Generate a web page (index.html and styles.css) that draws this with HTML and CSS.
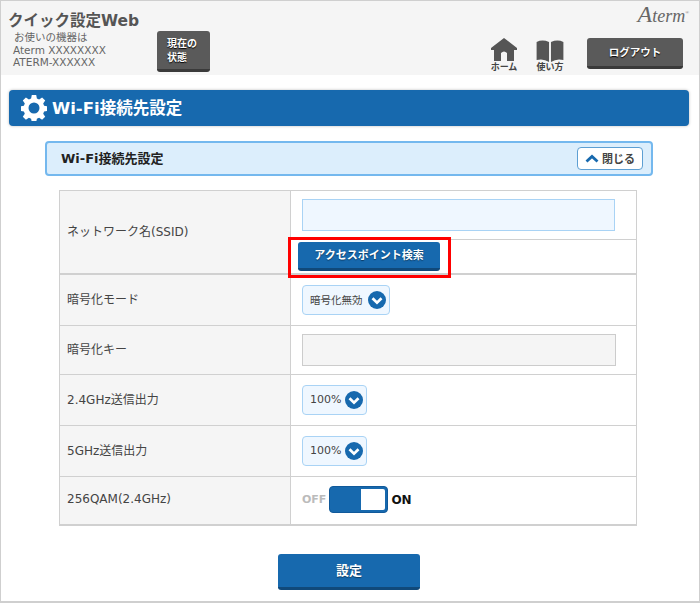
FILE: index.html
```html
<!DOCTYPE html>
<html lang="ja">
<head>
  <meta charset="UTF-8">
  <meta name="viewport" content="width=device-width, initial-scale=1.0">
  <title>Wi-Fi接続先設定</title>
  <link rel="stylesheet" href="styles.css">
</head>
<body>
  <div class="container">
    <header>
      <div class="device">
        <div class="logo">クイック設定Web</div>
        <p class="device-label">お使いの機器は</p>
        <p>Aterm XXXXXXXX</p>
        <p>ATERM-XXXXXX</p>
      </div>
      <a class="btn-dark btn-status">現在の<br>状態</a>
      <nav>
        <a class="nav-home">
          <svg width="26" height="23" viewBox="0 0 26 23"><path d="M13 0 L26 10 L26 12 L23 12 L23 23 L16 23 L16 15 Q13 12 10 15 L10 23 L3 23 L3 12 L0 12 L0 10 Z" fill="#555"/></svg>
          <span>ホーム</span>
        </a>
        <a class="nav-help">
          <svg width="30" height="22" viewBox="0 0 30 23"><path d="M1 2 Q7 -1 14 2 L14 23 Q8 19 1 21 Z M16 2 Q23 -1 29 2 L29 21 Q22 19 16 23 Z" fill="#555"/></svg>
          <span>使い方</span>
        </a>
        <a class="btn-dark btn-logout">ログアウト</a>
      </nav>
      <div class="brand">Aterm<sup>®</sup></div>
    </header>

    <h1 class="page-title">
      <svg width="26" height="26" viewBox="0 0 26 26"><path fill="#fff" fill-rule="evenodd" d="M10.8 0h4.4l.7 3.5 2.2.9 3-2 3.1 3.100-2 3 .9 2.200 3.500.7v4.400l-3.500.7-.9 2.200 2 3-3.100 3.100-3-2-2.200.9-.7 3.500h-4.400l-.7-3.500-2.200-.9-3 2-3.100-3.100 2-3-.9-2.200-3.500-.7v-4.400l3.500-.7.9-2.200-2-3 3.100-3.100 3 2 2.200-.9zM13 7.500a5.500 5.500 0 1 0 0 11 5.500 5.500 0 0 0 0-11z"/></svg>
      <span>Wi-Fi接続先設定</span>
    </h1>

    <div class="panel-head">
      <h2>Wi-Fi接続先設定</h2>
      <a class="btn-close">
        <svg width="14" height="9" viewBox="0 0 14 9"><path d="M1.500 7.500 L7 2.500 L12.500 7.500" fill="none" stroke="#1769ae" stroke-width="2.800"/></svg>
        <span>閉じる</span>
      </a>
    </div>

    <div class="settings">
      <div class="row row-ssid">
        <div class="label">ネットワーク名(SSID)</div>
        <div class="value-stack">
          <div class="ssid-input"><div class="input input-ssid"></div></div>
          <div class="ssid-search">
            <a class="btn-blue btn-search">アクセスポイント検索</a>
            <div class="highlight"></div>
          </div>
        </div>
      </div>
      <div class="row row-mode">
        <div class="label">暗号化モード</div>
        <div class="value">
          <div class="select select-mode">暗号化無効
            <svg class="chevron" width="18" height="18" viewBox="0 0 20 20"><circle cx="10" cy="10" r="10" fill="#1769ae"/><path d="M5 8 L10 13 L15 8" fill="none" stroke="#fff" stroke-width="3"/></svg>
          </div>
        </div>
      </div>
      <div class="row row-key">
        <div class="label">暗号化キー</div>
        <div class="value"><div class="input input-key"></div></div>
      </div>
      <div class="row row-power">
        <div class="label">2.4GHz送信出力</div>
        <div class="value">
          <div class="select">100%
            <svg class="chevron" width="18" height="18" viewBox="0 0 20 20"><circle cx="10" cy="10" r="10" fill="#1769ae"/><path d="M5 8 L10 13 L15 8" fill="none" stroke="#fff" stroke-width="3"/></svg>
          </div>
        </div>
      </div>
      <div class="row row-power">
        <div class="label">5GHz送信出力</div>
        <div class="value">
          <div class="select">100%
            <svg class="chevron" width="18" height="18" viewBox="0 0 20 20"><circle cx="10" cy="10" r="10" fill="#1769ae"/><path d="M5 8 L10 13 L15 8" fill="none" stroke="#fff" stroke-width="3"/></svg>
          </div>
        </div>
      </div>
      <div class="row row-qam">
        <div class="label">256QAM(2.4GHz)</div>
        <div class="value toggle-wrap">
          <span class="off">OFF</span>
          <div class="toggle"><div class="knob"></div></div>
          <span class="on">ON</span>
        </div>
      </div>
    </div>

    <div class="actions">
      <a class="btn-blue btn-submit">設定</a>
    </div>
  </div>
</body>
</html>
```

FILE: styles.css
```css
* { margin: 0; padding: 0; box-sizing: border-box; }
body {
  font-family: 'DejaVu Sans', 'Noto Sans CJK JP', sans-serif;
  background-color: #ffffff;
  color: #333;
  font-size: 12px;
}
.container {
  width: 700px;
  height: 603px;
  border: 1px solid #cfcfcf;
  border-bottom-width: 2px;
  overflow: hidden;
}

header {
  position: relative;
  height: 74px;
  background-color: #f5f5f5;
  display: flex;
  align-items: flex-start;
  padding-left: 7px;
}
.device { width: 149px; padding-top: 9px; color: #666; font-size: 10.5px; line-height: 12.5px; }
.device p { white-space: nowrap; padding-left: 5px; }
.device .device-label { padding-left: 6px; }
.logo { font-size: 15.5px; font-weight: bold; line-height: 22px; color: #555; margin-bottom: -1px; }

.btn-dark {
  display: block;
  background: #5a5a5a;
  border-bottom: 3px solid #3a3a3a;
  border-radius: 3px;
  color: #fff;
  font-weight: bold;
  font-size: 10px;
  line-height: 14px;
  text-shadow: 0 1px 1px #000;
}
.btn-status { width: 53px; height: 41px; margin-top: 30px; padding: 6px 0 0 10px; }

nav { margin-left: auto; display: flex; align-items: flex-start; padding-right: 16px; }
nav a { display: flex; flex-direction: column; align-items: center; }
nav span { font-size: 9px; line-height: 11px; color: #444; font-weight: bold; margin-top: 1px; }
.nav-home { width: 30px; margin-top: 37px; }
.nav-help { width: 32px; margin: 39px 0 0 15px; }
.nav-help span { margin-top: 0; }
nav .btn-logout {
  width: 96px;
  height: 31px;
  margin: 37px 0 0 21px;
  padding-top: 7px;
  font-size: 10.5px;
  text-align: center;
}

.brand {
  position: absolute;
  top: 0;
  right: 10px;
  font-family: 'Liberation Serif', serif;
  font-style: italic;
  font-size: 18px;
  color: #666;
}
.brand::first-letter { font-size: 24px; }
.brand sup { font-size: 5px; vertical-align: 8px; }

.page-title {
  margin: 15px 0 0 8px;
  width: 680px;
  height: 36px;
  background: #1769ae;
  border-radius: 4px;
  box-shadow: 0 0 3px #bbb;
  color: #fff;
  font-size: 16.5px;
  font-weight: bold;
  display: flex;
  align-items: center;
  gap: 5px;
  padding-left: 12px;
}
.page-title span { padding-bottom: 3px; }

.panel-head {
  margin: 15px 0 0 44px;
  width: 608px;
  height: 35px;
  background: #dceefc;
  border: 2px solid #74b8ee;
  border-radius: 4px;
  display: flex;
  align-items: center;
  justify-content: space-between;
  padding: 0 8px 0 14px;
}
.panel-head h2 { font-size: 13px; font-weight: bold; color: #222; padding-bottom: 3px; }
.btn-close {
  width: 66px;
  height: 23px;
  background: #fff;
  border: 1px solid #5d9fd3;
  border-radius: 4px;
  display: flex;
  align-items: center;
  justify-content: center;
  gap: 3px;
  font-size: 11px;
  color: #444;
  font-weight: bold;
}
.btn-close span { padding-bottom: 2px; }

.settings {
  margin: 14px 0 0 58px;
  width: 578px;
  border: 1px solid #d0d0d0;
  border-bottom-width: 2px;
}
.row { display: flex; border-bottom: 1px solid #d0d0d0; }
.row:last-child { border-bottom: 0; }
.row-ssid { height: 84px; border-bottom-width: 2px; }
.row-mode { height: 51px; }
.row-key { height: 49px; }
.row-power { height: 51px; }
.row-qam { height: 47px; }
.label {
  width: 231px;
  background: #f5f5f5;
  border-right: 1px solid #d0d0d0;
  display: flex;
  align-items: center;
  padding: 0 0 4px 7px;
  color: #444;
}
.value { flex: 1; display: flex; align-items: center; padding-left: 11px; }
.value-stack { flex: 1; display: flex; flex-direction: column; }
.ssid-input { height: 49px; padding: 8px 0 0 11px; border-bottom: 1px solid #d0d0d0; }
.ssid-search { position: relative; flex: 1; padding: 2px 0 0 7px; }
.input { height: 32px; border: 1px solid #a9d3f5; background: #eff7ff; }
.input-ssid { width: 313px; }
.input-key { width: 314px; background: #f5f5f5; border-color: #ccc; }

.btn-blue {
  display: flex;
  align-items: center;
  justify-content: center;
  background: #1769ae;
  border-bottom: 3px solid #10497a;
  border-radius: 3px;
  color: #fff;
  font-weight: bold;
  text-shadow: 0 1px 1px #0b3a63;
}
.btn-search { width: 142px; height: 29px; font-size: 11px; padding-bottom: 2px; }
.highlight {
  position: absolute;
  top: -3px;
  left: -3px;
  width: 163px;
  height: 41px;
  border: 3px solid #ff0000;
}

.select {
  height: 30px;
  width: 65px;
  border: 1px solid #a9d3f5;
  border-radius: 4px;
  background: #eff7ff;
  display: flex;
  align-items: center;
  justify-content: space-between;
  padding: 0 3px 2px 7px;
  font-size: 11px;
  color: #444;
}
.select .chevron { margin-top: 2px; }
.select-mode { width: 88px; font-size: 10.5px; }

.toggle-wrap { font-weight: bold; gap: 2px; padding-bottom: 2px; }
.off { color: #bbb; font-size: 11px; margin-right: 1px; }
.on { color: #111; margin-left: 1px; }
.toggle {
  width: 59px;
  height: 27px;
  background: #1769ae;
  border: 1px solid #10599a;
  border-radius: 4px;
  padding: 2px;
  display: flex;
  justify-content: flex-end;
}
.knob { width: 24px; background: #fff; border-radius: 0 2px 2px 0; }

.actions { margin-top: 28px; display: flex; justify-content: center; padding-right: 2px; }
.btn-submit { width: 142px; height: 36px; font-size: 13px; padding-bottom: 2px; }
```
